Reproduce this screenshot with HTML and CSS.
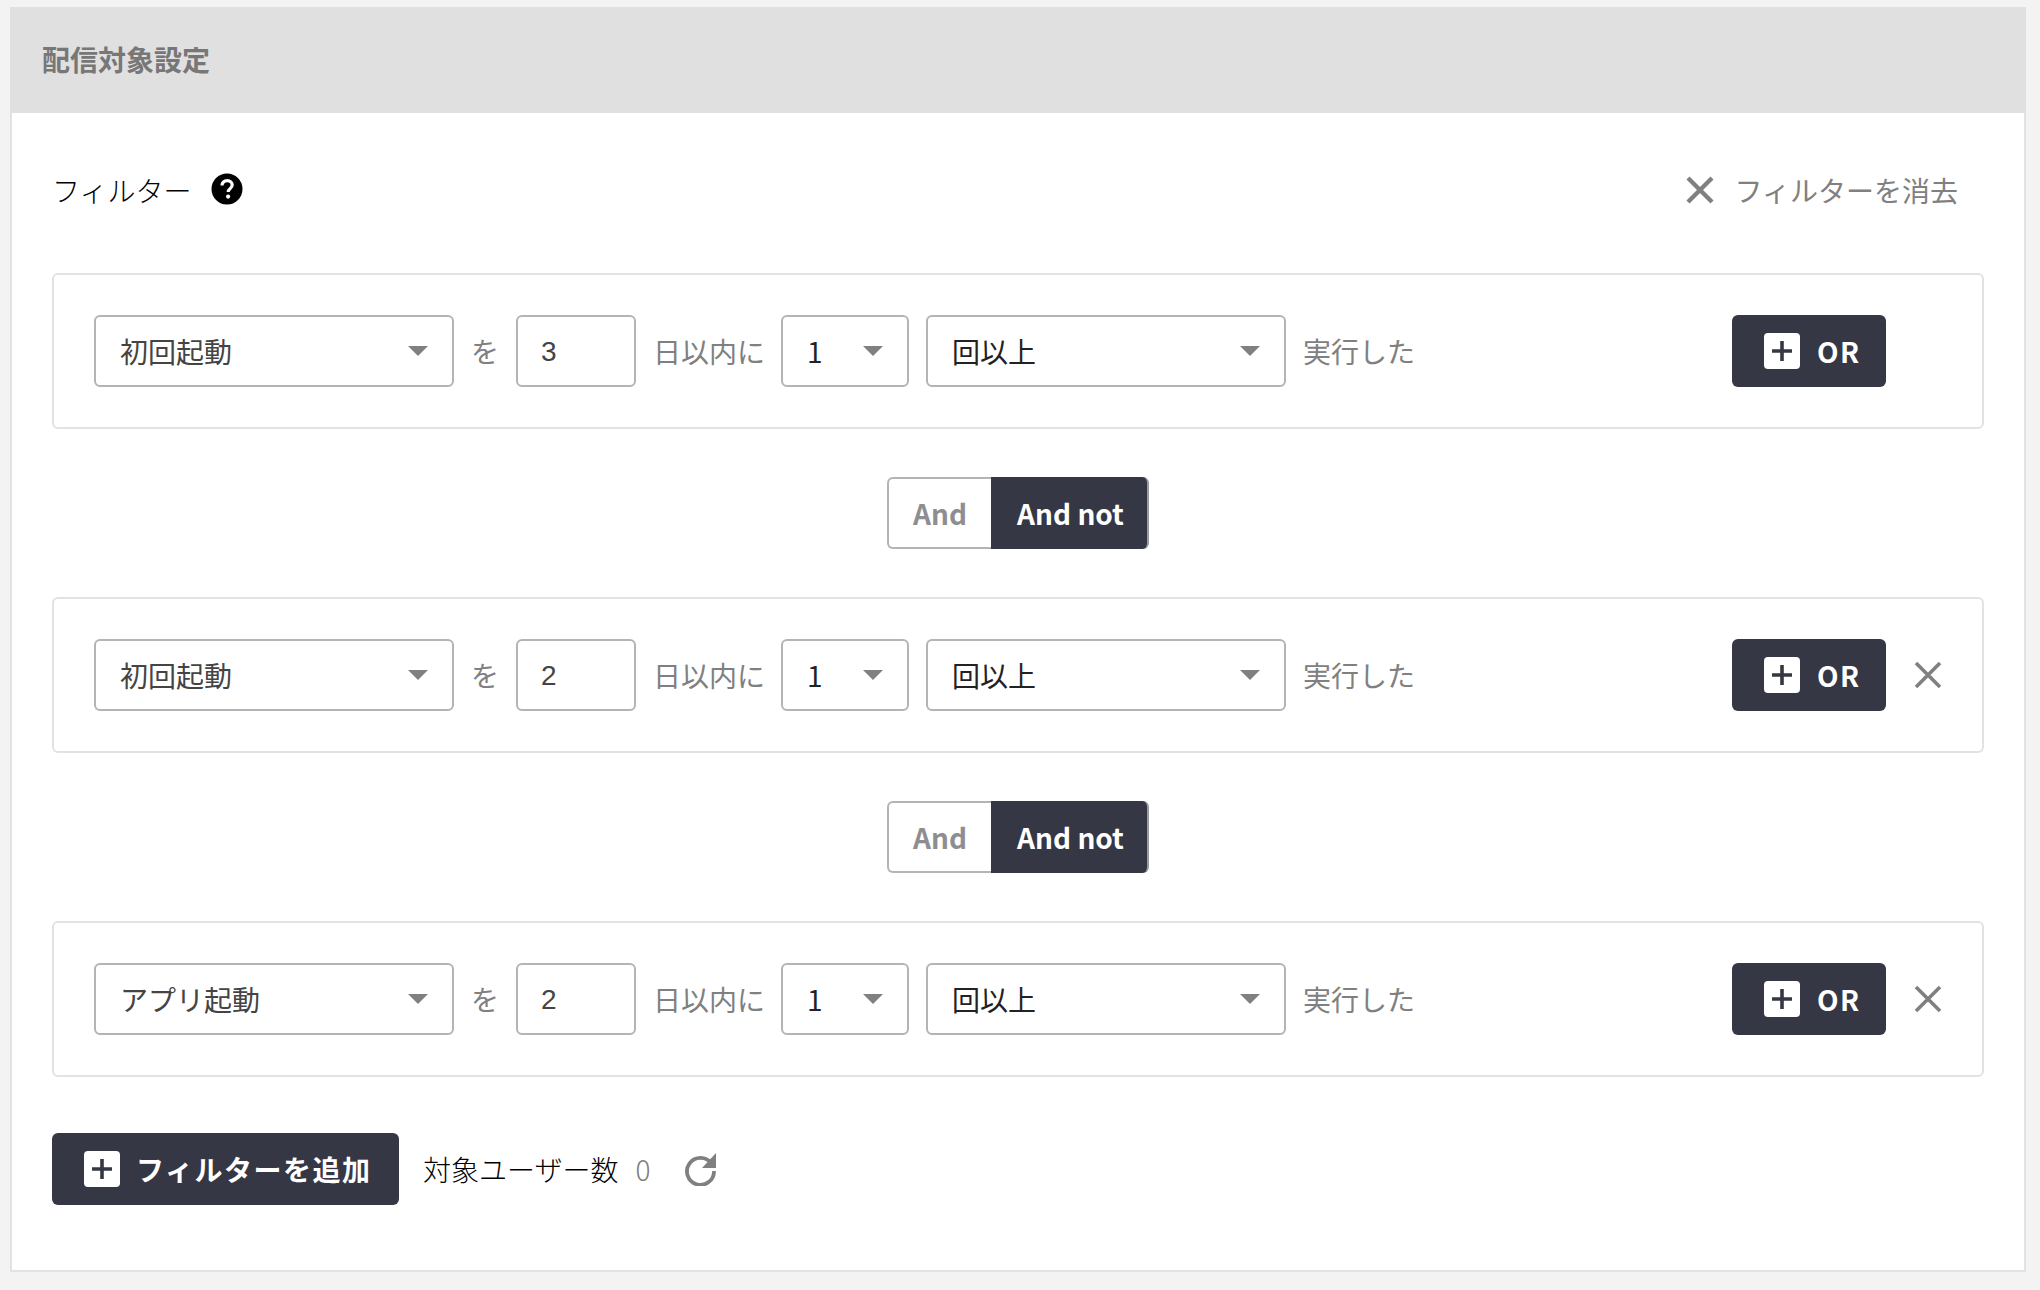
FILE: index.html
```html
<!DOCTYPE html>
<html lang="ja">
<head>
<meta charset="utf-8">
<title>配信対象設定</title>
<link rel="stylesheet" href="styles.css">
</head>
<body>
<section class="card">
  <header class="card-head">配信対象設定</header>
  <div class="card-body">
    <div class="toolbar">
      <div class="toolbar-title">
        <span>フィルター</span>
        <svg class="help" viewBox="0 0 32 32"><circle cx="16" cy="16" r="15.5" fill="#000"/><path d="M11 12.6c0-3 2.2-4.9 5.2-4.9s5 1.8 5 4.3c0 3.5-4 3.8-4 6.9" fill="none" stroke="#fff" stroke-width="3.2"/><circle cx="17.1" cy="23.6" r="2.1" fill="#fff"/></svg>
      </div>
      <div class="clear">
        <svg class="x x-clear" viewBox="0 0 28 28"><path d="M2 2l24 24M26 2L2 26"/></svg>
        <span>フィルターを消去</span>
      </div>
    </div>

    <div class="rule">
      <div class="select select-lg"><span class="value muted">初回起動</span><i class="caret"></i></div>
      <span class="label">を</span>
      <div class="input">3</div>
      <span class="label">日以内に</span>
      <div class="select select-sm"><span class="value">1</span><i class="caret"></i></div>
      <div class="select select-lg"><span class="value">回以上</span><i class="caret"></i></div>
      <span class="label">実行した</span>
      <button class="btn btn-or"><svg class="plus" viewBox="0 0 36 36"><rect width="36" height="36" rx="4" fill="#fff"/><path d="M18 8v20M8 18h20" stroke="#353744" stroke-width="3.6"/></svg><span>OR</span></button>
      <span class="remove-slot"></span>
    </div>

    <div class="toggle"><span class="seg">And</span><span class="seg seg-on">And not</span></div>

    <div class="rule">
      <div class="select select-lg"><span class="value muted">初回起動</span><i class="caret"></i></div>
      <span class="label">を</span>
      <div class="input">2</div>
      <span class="label">日以内に</span>
      <div class="select select-sm"><span class="value">1</span><i class="caret"></i></div>
      <div class="select select-lg"><span class="value">回以上</span><i class="caret"></i></div>
      <span class="label">実行した</span>
      <button class="btn btn-or"><svg class="plus" viewBox="0 0 36 36"><rect width="36" height="36" rx="4" fill="#fff"/><path d="M18 8v20M8 18h20" stroke="#353744" stroke-width="3.6"/></svg><span>OR</span></button>
      <span class="remove-slot"><svg class="x" viewBox="0 0 28 28"><path d="M2 2l24 24M26 2L2 26"/></svg></span>
    </div>

    <div class="toggle"><span class="seg">And</span><span class="seg seg-on">And not</span></div>

    <div class="rule">
      <div class="select select-lg"><span class="value muted">アプリ起動</span><i class="caret"></i></div>
      <span class="label">を</span>
      <div class="input">2</div>
      <span class="label">日以内に</span>
      <div class="select select-sm"><span class="value">1</span><i class="caret"></i></div>
      <div class="select select-lg"><span class="value">回以上</span><i class="caret"></i></div>
      <span class="label">実行した</span>
      <button class="btn btn-or"><svg class="plus" viewBox="0 0 36 36"><rect width="36" height="36" rx="4" fill="#fff"/><path d="M18 8v20M8 18h20" stroke="#353744" stroke-width="3.6"/></svg><span>OR</span></button>
      <span class="remove-slot"><svg class="x" viewBox="0 0 28 28"><path d="M2 2l24 24M26 2L2 26"/></svg></span>
    </div>

    <div class="footer">
      <button class="btn btn-add"><svg class="plus" viewBox="0 0 36 36"><rect width="36" height="36" rx="4" fill="#fff"/><path d="M18 8v20M8 18h20" stroke="#353744" stroke-width="3.6"/></svg><span>フィルターを追加</span></button>
      <span class="count-label">対象ユーザー数</span>
      <span class="count">0</span>
      <svg class="refresh" viewBox="0 0 34 34"><path d="M27.5 11.5A13.5 13.5 0 1 0 30 19" fill="none" stroke="#808080" stroke-width="3.8"/><path d="M32 1v15H18z" fill="#808080"/></svg>
    </div>
  </div>
</section>
</body>
</html>
```
FILE: styles.css
```css
* { box-sizing: border-box; }
html, body { margin: 0; height: 100%; }
body {
  background: #f3f3f3;
  padding: 7px 14px 0 10px;
  font-family: "Noto Sans CJK JP", "Noto Sans", sans-serif;
  font-size: 28px;
  color: #000;
}
.card {
  background: #fff;
  border: 2px solid #e2e2e2;
  border-top: 0;
  height: 1265px;
}
.card-head {
  height: 106px;
  margin: 0 -2px;
  background: #e0e0e0;
  color: #777;
  font-weight: 700;
  font-size: 28px;
  line-height: 104px;
  padding-left: 32px;
}
.card-body { padding: 45px 40px 0; }
.toolbar {
  height: 64px;
  margin-bottom: 51px;
  display: flex;
  align-items: center;
  justify-content: space-between;
}
.toolbar-title { display: flex; align-items: center; gap: 20px; font-weight: 300; }
.help { width: 32px; height: 32px; margin-top: -2px; }
.clear { display: flex; align-items: center; gap: 21px; color: #808080; margin-right: 26px; }
.x { width: 28px; height: 28px; fill: none; stroke: #808080; stroke-width: 3.6; display: block; }
.x-clear { stroke-width: 4.4; }
.rule {
  height: 156px;
  border: 2px solid #e2e2e2;
  border-radius: 6px;
  padding: 0 40px 1px;
  display: flex;
  align-items: center;
  gap: 16px;
}
.select, .input {
  height: 72px;
  border: 2px solid #b3b4b8;
  border-radius: 6px;
  background: #fff;
  display: flex;
  align-items: center;
}
.select { padding: 0 24px; justify-content: space-between; }
.select-lg { width: 360px; }
.select-sm { width: 128px; margin: 0 1px 0 -1px; }
.value { color: #222; }
.muted { color: #444; }
.caret {
  width: 0;
  height: 0;
  border-left: 10px solid transparent;
  border-right: 10px solid transparent;
  border-top: 10px solid #808080;
}
.input {
  width: 120px;
  padding: 2px 0 0 23px;
  font-family: "Liberation Sans", Arial, sans-serif;
  font-size: 28px;
  color: #444;
}
.label { color: #808080; white-space: nowrap; margin: 0 1px; }
.btn {
  height: 72px;
  border: 0;
  border-radius: 6px;
  background: #353744;
  color: #fff;
  font-family: inherit;
  font-size: 28px;
  font-weight: 700;
  display: flex;
  align-items: center;
  padding: 0;
}
.plus { width: 36px; height: 36px; display: block; }
.btn-or {
  width: 154px;
  margin-left: auto;
  padding-left: 32px;
  gap: 17px;
  letter-spacing: 1.4px;
}
.remove-slot { width: 28px; height: 28px; margin-left: 12px; flex: none; }
.toggle {
  width: 262px;
  height: 72px;
  margin: 48px auto 48px;
  display: flex;
  font-weight: 700;
}
.seg {
  width: 104px;
  border: 2px solid #b3b4b8;
  border-right: 0;
  border-radius: 6px 0 0 6px;
  color: #8e8e92;
  display: flex;
  align-items: center;
  justify-content: center;
}
.seg-on {
  width: 158px;
  background: #353744;
  border: 0;
  border-right: 2px solid #9a9ba1;
  border-radius: 0 6px 6px 0;
  color: #fff;
  padding-left: 3px;
}
.footer {
  margin-top: 56px;
  display: flex;
  align-items: center;
}
.btn-add {
  width: 347px;
  padding-left: 32px;
  gap: 16px;
  letter-spacing: 1.5px;
}
.count-label { margin-left: 24px; font-weight: 300; }
.count { margin-left: 17px; color: #808080; font-weight: 300; }
.refresh { width: 34px; height: 34px; margin-left: 34px; }
```
